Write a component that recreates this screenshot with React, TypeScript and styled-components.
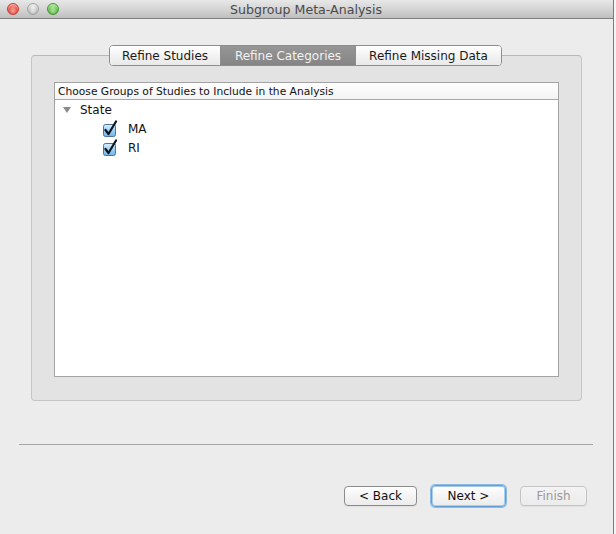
import React from "react";
import styled, { createGlobalStyle } from "styled-components";

const Global = createGlobalStyle`
  html, body { margin: 0; padding: 0; background: #f4f4f4; }
  body { font-family: "DejaVu Sans", "Liberation Sans", sans-serif; }
  * { box-sizing: border-box; }
`;

const Window = styled.div`
  width: 614px;
  height: 534px;
  background: #ececec;
  border-right: 1px solid #7d7d7d;
  display: flex;
  flex-direction: column;
  overflow: hidden;
`;

const TitleBar = styled.div`
  height: 19px;
  flex: none;
  background: linear-gradient(#e8e8e8, #d3d3d3 55%, #bfbfbf);
  border-bottom: 1px solid #7f7f7f;
  position: relative;
  display: flex;
  align-items: center;
  justify-content: center;
`;

const Lights = styled.div`
  position: absolute;
  left: 7px;
  top: 3px;
  display: flex;
  gap: 8px;
`;

const Light = styled.span<{ $c: string; $e: string }>`
  width: 12px;
  height: 12px;
  border-radius: 50%;
  border: 1px solid ${(p) => p.$e};
  background: radial-gradient(circle at 50% 75%, #ffffff66 0%, transparent 45%),
    radial-gradient(circle at 50% 30%, ${(p) => p.$c} 0%, ${(p) => p.$e} 100%);
  box-shadow: inset 0 1px 1px rgba(255, 255, 255, 0.6);
`;

const Title = styled.div`
  font-size: 12.6px;
  color: #4a4a4a;
  margin-left: -1px;
`;

const Body = styled.div`
  flex: 1;
  display: flex;
  flex-direction: column;
  padding: 26px 0 0 0;
`;

const TabArea = styled.div`
  margin: 0 31px;
  display: flex;
  flex-direction: column;
  align-items: center;
`;

const TabStrip = styled.div`
  display: flex;
  height: 21px;
  border: 1px solid #8d8d8d;
  border-radius: 4px;
  overflow: hidden;
  margin-bottom: -11px;
  margin-left: -2px;
  position: relative;
  z-index: 1;
  background: #fff;
`;

const Tab = styled.div<{ $sel?: boolean; $w: number }>`
  width: ${(p) => p.$w}px;
  display: flex;
  align-items: center;
  justify-content: center;
  font-size: 12px;
  color: ${(p) => (p.$sel ? "#f2f2f2" : "#1a1a1a")};
  background: ${(p) =>
    p.$sel ? "linear-gradient(#969696, #858585)" : "linear-gradient(#ffffff, #f1f1f1 60%, #e9e9e9)"};
  border-left: 1px solid #8d8d8d;
  &:first-child { border-left: none; }
`;

const Panel = styled.div`
  align-self: stretch;
  height: 346px;
  background: #e3e3e3;
  border: 1px solid #c6c6c6;
  border-top-color: #b8b8b8;
  border-radius: 4px;
  padding: 26px 22px 23px 22px;
  display: flex;
`;

const ListBox = styled.div`
  flex: 1;
  background: #fff;
  border: 1px solid #a3a3a3;
  display: flex;
  flex-direction: column;
`;

const ListHeader = styled.div`
  height: 17px;
  flex: none;
  font-size: 10.7px;
  color: #111;
  padding-left: 3px;
  display: flex;
  align-items: center;
  background: linear-gradient(#ffffff, #f3f3f3);
  border-bottom: 1px solid #a8a8a8;
`;

const Row = styled.div<{ $indent: number }>`
  height: 19px;
  display: flex;
  align-items: center;
  padding-left: ${(p) => p.$indent}px;
  font-size: 12px;
  color: #111;
`;

const Triangle = styled.span`
  width: 0;
  height: 0;
  border-left: 4px solid transparent;
  border-right: 4px solid transparent;
  border-top: 6px solid #8a8a8a;
  margin-right: 9px;
`;

const CheckWrap = styled.span`
  width: 16px;
  height: 18px;
  margin-right: 10px;
  display: flex;
  align-items: center;
`;

const Separator = styled.div`
  margin: 43px 20px 0 19px;
  height: 1px;
  background: #a6a6a6;
`;

const ButtonRow = styled.div`
  display: flex;
  justify-content: flex-end;
  align-items: center;
  gap: 15px;
  padding: 40px 26px 0 0;
`;

const Button = styled.div<{ $variant?: "default" | "focus" | "disabled"; $w: number }>`
  width: ${(p) => p.$w}px;
  height: ${(p) => (p.$variant === "focus" ? 22 : 20)}px;
  margin: ${(p) => (p.$variant === "focus" ? "0 -1px" : "0")};
  display: flex;
  align-items: center;
  justify-content: center;
  font-size: 12px;
  border-radius: 4px;
  color: ${(p) => (p.$variant === "disabled" ? "#9a9a9a" : "#111")};
  border: 1px solid
    ${(p) => (p.$variant === "disabled" ? "#c4c4c4" : p.$variant === "focus" ? "#5f9fd6" : "#8b8b8b")};
  background: ${(p) =>
    p.$variant === "disabled"
      ? "linear-gradient(#f3f3f3, #ececec)"
      : "linear-gradient(#ffffff, #f4f4f4 50%, #ececec)"};
  box-shadow: ${(p) =>
    p.$variant === "focus"
      ? "0 0 0 1px #8cbbe6, inset 0 0 0 1px #a9cdee"
      : "0 1px 0 rgba(0,0,0,0.05)"};
`;

function Check() {
  return (
    <svg width="16" height="18" viewBox="0 0 16 18">
      <defs>
        <linearGradient id="cb" x1="0" y1="0" x2="0" y2="1">
          <stop offset="0" stopColor="#d9efff" />
          <stop offset="0.5" stopColor="#9fd0f5" />
          <stop offset="1" stopColor="#6cb6ec" />
        </linearGradient>
      </defs>
      <rect x="1.5" y="4.5" width="12" height="12" rx="2" fill="url(#cb)" stroke="#4f7396" />
      <path d="M3.5 10 L6.5 14 L14 1.5" fill="none" stroke="#0d1620" strokeWidth="2.2" strokeLinecap="round" strokeLinejoin="round" />
    </svg>
  );
}

export default function App() {
  return (
    <>
      <Global />
      <Window>
        <TitleBar>
          <Lights>
            <Light $c="#ff8a80" $e="#c93a2e" />
            <Light $c="#f2f2f2" $e="#a3a3a3" />
            <Light $c="#a8ec8f" $e="#3f9a2f" />
          </Lights>
          <Title>Subgroup Meta-Analysis</Title>
        </TitleBar>
        <Body>
          <TabArea>
            <TabStrip>
              <Tab $w={110}>Refine Studies</Tab>
              <Tab $w={135} $sel>Refine Categories</Tab>
              <Tab $w={146}>Refine Missing Data</Tab>
            </TabStrip>
            <Panel>
              <ListBox>
                <ListHeader>Choose Groups of Studies to Include in the Analysis</ListHeader>
                <Row $indent={8}>
                  <Triangle />
                  State
                </Row>
                <Row $indent={47}>
                  <CheckWrap>
                    <Check />
                  </CheckWrap>
                  MA
                </Row>
                <Row $indent={47}>
                  <CheckWrap>
                    <Check />
                  </CheckWrap>
                  RI
                </Row>
              </ListBox>
            </Panel>
          </TabArea>
          <Separator />
          <ButtonRow>
            <Button $w={73}>&lt; Back</Button>
            <Button $w={75} $variant="focus">Next &gt;</Button>
            <Button $w={67} $variant="disabled">Finish</Button>
          </ButtonRow>
        </Body>
      </Window>
    </>
  );
}
